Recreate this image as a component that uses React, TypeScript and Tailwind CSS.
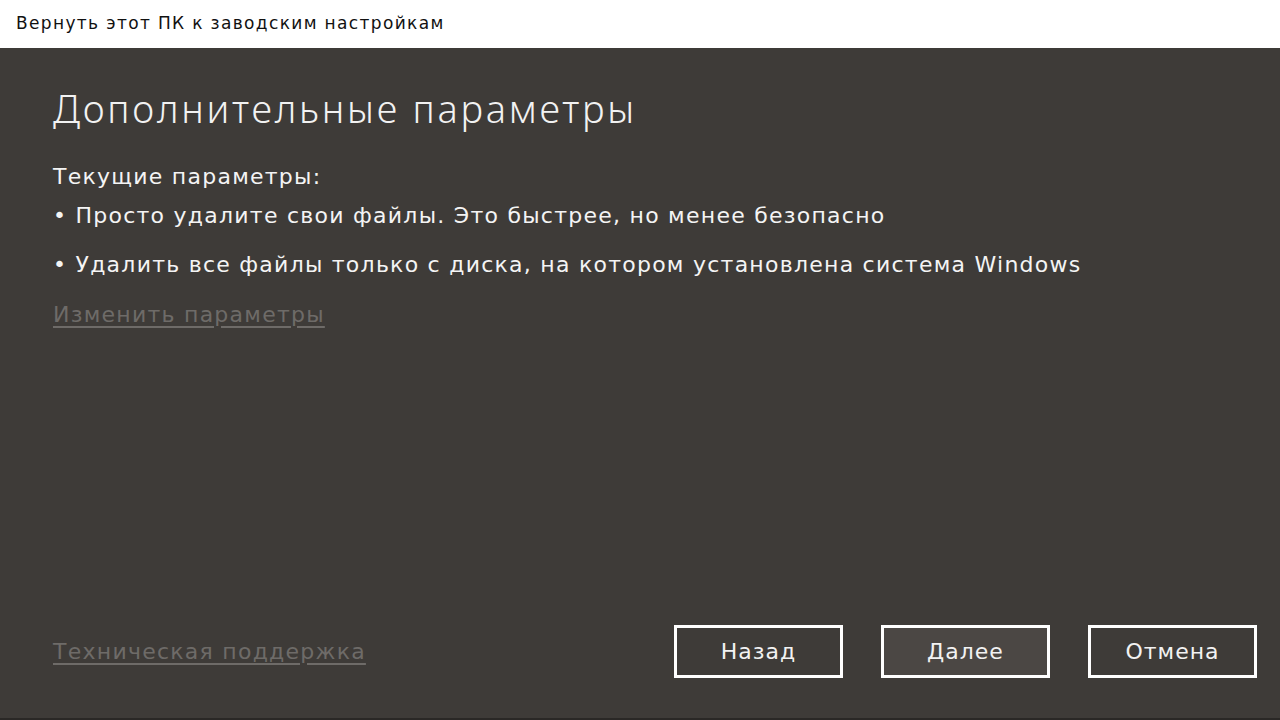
export default function App() {
  const font = { fontFamily: '"DejaVu Sans", "Noto Sans", sans-serif' };
  return (
    <div className="w-[1280px] h-[720px] flex flex-col bg-white overflow-hidden" style={font}>
      <div className="h-[48px] shrink-0 bg-white flex items-center pl-[16px] text-[17px] tracking-[1.35px] text-[#111] leading-none pb-[2px]">
        Вернуть этот ПК к заводским настройкам
      </div>
      <div className="flex-1 bg-[#3e3b38] flex flex-col pl-[53px] pr-[23px] pb-[40px] border-b-2 border-[#2a2826]">
        <h1 className="mt-[36px] text-[38px] font-light text-[#f2f2f2] leading-[48px] tracking-[2.75px] [font-family:'Noto_Sans',sans-serif]">Дополнительные параметры</h1>
        <div className="mt-[30px] text-[22px] tracking-[1.25px] text-[#f4f4f4] leading-[30px]">Текущие параметры:</div>
        <div className="mt-[9px] text-[22px] tracking-[1.25px] text-[#f4f4f4] leading-[30px]">• Просто удалите свои файлы. Это быстрее, но менее безопасно</div>
        <div className="mt-[19px] text-[22px] tracking-[1.25px] text-[#f4f4f4] leading-[30px]">• Удалить все файлы только с диска, на котором установлена система Windows</div>
        <div className="mt-[20px] text-[22px] tracking-[1.25px] text-[#6e6b68] leading-[30px] underline underline-offset-4">Изменить параметры</div>
        <div className="flex-1" />
        <div className="flex items-center">
          <div className="text-[22px] tracking-[1.25px] text-[#6e6b68] underline underline-offset-4 leading-[30px]">Техническая поддержка</div>
          <div className="flex-1" />
          <div className="flex gap-[38px]">
            <button className="w-[169px] h-[53px] border-[3px] border-white bg-[#3e3b38] text-[22px] tracking-[1px] text-[#f2f2f2]">Назад</button>
            <button className="w-[169px] h-[53px] border-[3px] border-white bg-[#4b4744] text-[22px] tracking-[1px] text-[#f2f2f2]">Далее</button>
            <button className="w-[169px] h-[53px] border-[3px] border-white bg-[#3e3b38] text-[22px] tracking-[1px] text-[#f2f2f2]">Отмена</button>
          </div>
        </div>
      </div>
    </div>
  );
}
